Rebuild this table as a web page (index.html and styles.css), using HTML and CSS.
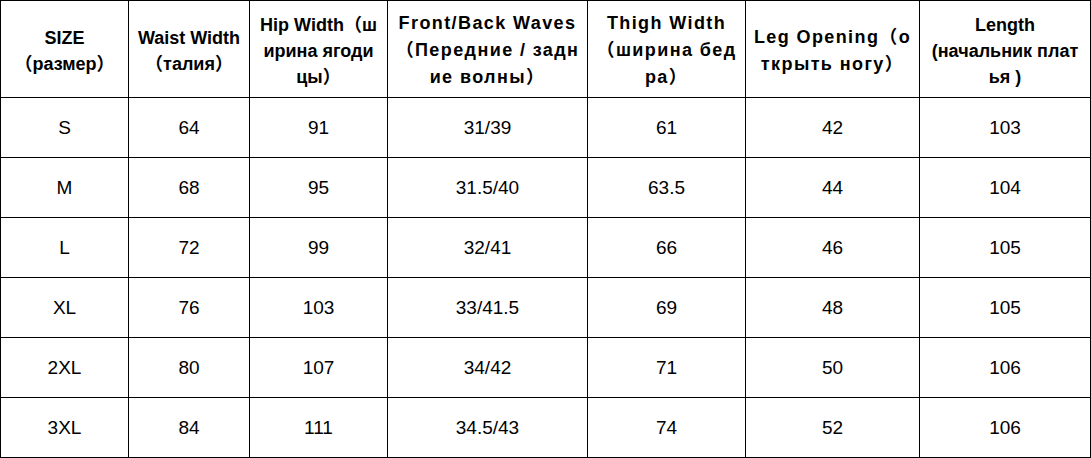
FILE: index.html
```html
<!DOCTYPE html>
<html lang="ru">
<head>
<meta charset="utf-8">
<title>Size chart</title>
<link rel="stylesheet" href="styles.css">
</head>
<body>
<div class="chart">
  <div class="cell head">SIZE<br>（размер）</div>
  <div class="cell head">Waist Width<br>（талия）</div>
  <div class="cell head">Hip Width（ш<br>ирина ягоди<br>цы）</div>
  <div class="cell head wide">Front/Back Waves<br>（Передние / задн<br>ие волны）</div>
  <div class="cell head wide">Thigh Width<br>（ширина бед<br>ра）</div>
  <div class="cell head wide">Leg Opening（о<br>ткрыть ногу）</div>
  <div class="cell head">Length<br>(начальник плат<br>ья )</div>

  <div class="cell">S</div><div class="cell">64</div><div class="cell">91</div><div class="cell">31/39</div><div class="cell">61</div><div class="cell">42</div><div class="cell">103</div>
  <div class="cell">M</div><div class="cell">68</div><div class="cell">95</div><div class="cell">31.5/40</div><div class="cell">63.5</div><div class="cell">44</div><div class="cell">104</div>
  <div class="cell">L</div><div class="cell">72</div><div class="cell">99</div><div class="cell">32/41</div><div class="cell">66</div><div class="cell">46</div><div class="cell">105</div>
  <div class="cell">XL</div><div class="cell">76</div><div class="cell">103</div><div class="cell">33/41.5</div><div class="cell">69</div><div class="cell">48</div><div class="cell">105</div>
  <div class="cell">2XL</div><div class="cell">80</div><div class="cell">107</div><div class="cell">34/42</div><div class="cell">71</div><div class="cell">50</div><div class="cell">106</div>
  <div class="cell">3XL</div><div class="cell">84</div><div class="cell">111</div><div class="cell">34.5/43</div><div class="cell">74</div><div class="cell">52</div><div class="cell">106</div>
</div>
</body>
</html>
```

FILE: styles.css
```css
html, body {
  margin: 0;
  padding: 0;
  background: #fff;
}

.chart {
  display: grid;
  grid-template-columns: 127px 120px 137px 199px 157px 173px 170px;
  grid-template-rows: 96px repeat(6, 59px);
  gap: 1px;
  padding: 1px;
  background: #000;
  width: 1091px;
  box-sizing: border-box;
  font-family: "Liberation Sans", Arial, "Noto Sans CJK SC", sans-serif;
}

.cell {
  background: #fff;
  display: flex;
  align-items: center;
  justify-content: center;
  text-align: center;
  font-size: 19px;
  color: #000;
  white-space: nowrap;
}

.head {
  font-weight: bold;
  font-size: 18px;
  line-height: 26px;
  padding-top: 3px;
  box-sizing: border-box;
}

.wide {
  letter-spacing: 1.4px;
  line-height: 27px;
}
```
